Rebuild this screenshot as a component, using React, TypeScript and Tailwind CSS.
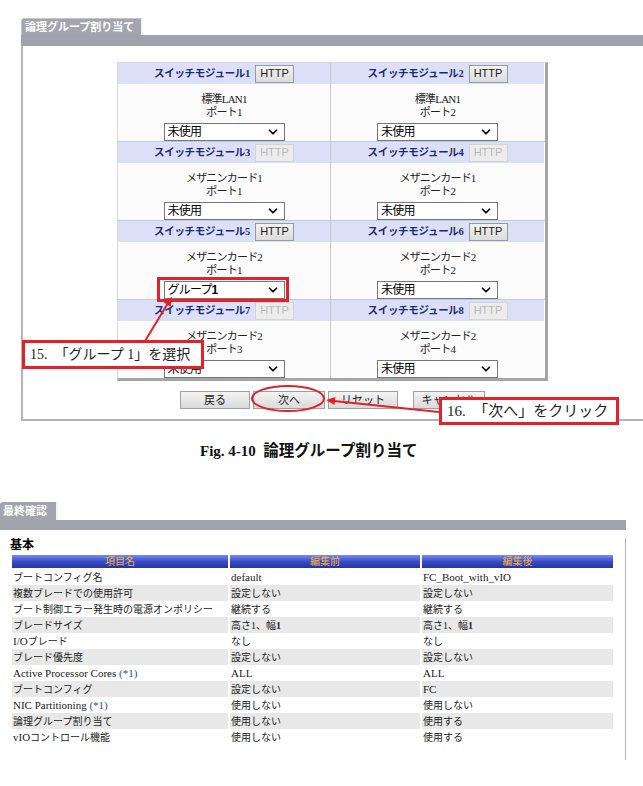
import { ChevronDown } from "lucide-react";

type Module = {
  no: number;
  card: string;
  port: string;
  http: boolean;
  value: string;
};

const modules: Module[][] = [
  [
    { no: 1, card: "標準LAN1", port: "ポート1", http: true, value: "未使用" },
    { no: 2, card: "標準LAN1", port: "ポート2", http: true, value: "未使用" },
  ],
  [
    { no: 3, card: "メザニンカード1", port: "ポート1", http: false, value: "未使用" },
    { no: 4, card: "メザニンカード1", port: "ポート2", http: false, value: "未使用" },
  ],
  [
    { no: 5, card: "メザニンカード2", port: "ポート1", http: true, value: "グループ1" },
    { no: 6, card: "メザニンカード2", port: "ポート2", http: true, value: "未使用" },
  ],
  [
    { no: 7, card: "メザニンカード2", port: "ポート3", http: false, value: "未使用" },
    { no: 8, card: "メザニンカード2", port: "ポート4", http: false, value: "未使用" },
  ],
];

type Row = { name: React.ReactNode; before: React.ReactNode; after: React.ReactNode };

const rows: Row[] = [
  { name: "ブートコンフィグ名", before: <span className="text-[11px]">default</span>, after: <span className="text-[11px]">FC_Boot_with_vIO</span> },
  { name: "複数ブレードでの使用許可", before: "設定しない", after: "設定しない" },
  { name: "ブート制御エラー発生時の電源オンポリシー", before: "継続する", after: "継続する" },
  { name: "ブレードサイズ", before: <>高さ1、幅<b>1</b></>, after: <>高さ1、幅<b>1</b></> },
  { name: <><span className="text-[11px]">I/O</span>ブレード</>, before: "なし", after: "なし" },
  { name: "ブレード優先度", before: "設定しない", after: "設定しない" },
  {
    name: (
      <span className="text-[11px]">
        Active Processor Cores <span className="text-[#3344cc]">(*1)</span>
      </span>
    ),
    before: <span className="text-[11px]">ALL</span>,
    after: <span className="text-[11px]">ALL</span>,
  },
  { name: "ブートコンフィグ", before: "設定しない", after: <span className="text-[11px]">FC</span> },
  {
    name: (
      <span className="text-[11px]">
        NIC Partitioning <span className="text-[#3344cc]">(*1)</span>
      </span>
    ),
    before: "使用しない",
    after: "使用しない",
  },
  { name: "論理グループ割り当て", before: "使用しない", after: "使用する" },
  { name: <><span className="text-[11px]">vIO</span>コントロール機能</>, before: "使用しない", after: "使用する" },
];

function FakeSelect({ value, highlight }: { value: string; highlight?: boolean }) {
  return (
    <div className="relative mt-[4px]">
      <div className="flex h-[18px] w-[121px] items-center justify-between border border-[#767676] bg-white pl-[3px] pr-[4px] font-['Liberation_Sans','Noto_Sans_CJK_JP',sans-serif] text-[12px] leading-none text-black">
        <span>
          {value === "グループ1" ? (
            <>
              グループ<b>1</b>
            </>
          ) : (
            value
          )}
        </span>
        <ChevronDown size={14} strokeWidth={3} />
      </div>
      {highlight && (
        <div className="absolute -top-[4px] -right-[4px] -bottom-[3px] -left-[7px] border-[3px] border-[#e4202a]" />
      )}
    </div>
  );
}

function ModuleCell({ m, right }: { m: Module; right?: boolean }) {
  return (
    <div className={right ? "w-[213px]" : "w-[213px] border-r border-[#c8c8c8]"}>
      <div className="flex h-[21px] items-center justify-center gap-[5px] bg-[#dcdff8]">
        <span className="text-[10.5px] font-bold tracking-[-0.3px] text-[#1c2c70]">
          スイッチモジュール{m.no}
        </span>
        <div
          className={
            m.http
              ? "flex h-[18px] w-[39px] items-center justify-center border border-[#9a9a9a] bg-gradient-to-b from-[#f2f2f2] to-[#dcdcdc] font-['Liberation_Sans',sans-serif] text-[11px] text-[#222]"
              : "flex h-[18px] w-[39px] items-center justify-center border border-[#d4d4d4] bg-[#ececec] font-['Liberation_Sans',sans-serif] text-[11px] text-[#b8b8b8]"
          }
        >
          HTTP
        </div>
      </div>
      <div className="flex h-[57px] flex-col items-center bg-[#fbfbfb] pt-[9px] text-[11px] leading-[13px] tracking-[-0.8px] text-[#222]">
        <span>{m.card}</span>
        <span>{m.port}</span>
        <FakeSelect value={m.value} highlight={m.value === "グループ1"} />
      </div>
    </div>
  );
}

function Btn({ label, className }: { label: string; className?: string }) {
  return (
    <div
      className={
        "flex h-[18px] w-[70px] items-center justify-center border border-[#a0a0a0] bg-gradient-to-b from-[#f4f4f4] to-[#dadada] font-['Liberation_Sans','Noto_Sans_CJK_JP',sans-serif] text-[11px] text-[#222] " +
        (className ?? "")
      }
    >
      {label}
    </div>
  );
}

export default function App() {
  return (
    <div className="relative h-[786px] w-[643px] overflow-hidden bg-white font-['Liberation_Serif','Noto_Sans_CJK_JP',serif]">
      {/* 論理グループ割り当て */}
      <div className="ml-[21px] pt-[18px]">
        <div className="flex h-[17px] w-[122px] items-center rounded-tl-[3px] border-t border-l border-[#c4c4cc] border-r-[2px] border-r-[#f4f4f4] bg-[#a4a4ae] pl-[3px] text-[11px] font-bold text-white">
          論理グループ割り当て
        </div>
        <div className="h-[11px] bg-[#a2a2ac]" />
        <div className="border-b-2 border-l-2 border-[#b4b4b8] pt-[16px] pb-[10px]">
          <div className="ml-[94px] w-[431px] border-t border-l border-r-[3px] border-b-[3px] border-t-[#d8d8d8] border-l-[#d8d8d8] border-r-[#a6a6a6] border-b-[#a6a6a6]">
            {modules.map((pair, i) => (
              <div key={i} className={i === 0 ? "flex" : "flex border-t border-[#c4c8e4]"}>
                <ModuleCell m={pair[0]} />
                <ModuleCell m={pair[1]} right />
              </div>
            ))}
          </div>
          <div className="mt-[10px] ml-[157px] flex">
            <Btn label="戻る" />
            <Btn label="次へ" className="ml-[3px] w-[72px]" />
            <Btn label="リセット" className="ml-[3px]" />
            <Btn label="キャンセル" className="ml-[15px] w-[72px]" />
          </div>
        </div>
      </div>

      <div className="mt-[21px] pl-[200px] text-[15px] font-bold leading-[18px] text-[#111]">
        Fig. 4-10&nbsp;&nbsp;<span className="text-[15.5px]">論理グループ割り当て</span>
      </div>

      {/* 最終確認 */}
      <div className="mt-[42px] w-[626px]">
        <div className="flex h-[18px] w-[58px] items-center rounded-tl-[3px] border-r-[2px] border-r-[#f4f4f4] bg-[#a4a4ae] pl-[3px] text-[11px] font-bold text-white">
          最終確認
        </div>
        <div className="h-[10px] bg-[#a2a2ac]" />
        <div className="h-[222px] border-r border-[#b4b4b8] pl-[12px]">
          <div className="mt-[8px] -ml-[2px] text-[12px] font-bold leading-[14px] text-black">基本</div>
          <div className="mt-[3px] grid grid-cols-[216px_190px_191px] gap-x-[2px]">
            {["項目名", "編集前", "編集後"].map((h) => (
              <div
                key={h}
                className="mb-[1px] flex h-[13px] items-center justify-center bg-gradient-to-b from-[#7a8aec] via-[#3a4ccc] to-[#26329c] text-[10px] text-[#f4b03c]"
              >
                {h}
              </div>
            ))}
            {rows.map((r, i) => {
              const bg = i % 2 === 1 ? "bg-[#e8e8e8]" : "bg-white";
              const cell = "flex h-[16px] items-center pl-[1px] text-[10px] text-[#222] whitespace-nowrap " + bg;
              return [
                <div key={i + "a"} className={cell}>{r.name}</div>,
                <div key={i + "b"} className={cell}>{r.before}</div>,
                <div key={i + "c"} className={cell}>{r.after}</div>,
              ];
            })}
          </div>
        </div>
      </div>

      {/* callouts */}
      <div className="absolute top-[340px] left-[22px] flex h-[29px] w-[182px] items-center whitespace-nowrap border-[3px] border-[#e4202a] bg-white pl-[5px] text-[14px] text-[#222]">
        15.&nbsp; 「グループ 1」を選択
      </div>
      <div className="absolute top-[397px] left-[439px] flex h-[28px] w-[180px] items-center whitespace-nowrap border-[3px] border-[#e4202a] bg-white pl-[5px] text-[15px] text-[#222]">
        16.&nbsp; 「次へ」をクリック
      </div>
      <svg className="pointer-events-none absolute top-0 left-0" width="643" height="786">
        <ellipse cx="288" cy="398.5" rx="36" ry="12.5" fill="none" stroke="#e4202a" strokeWidth="2" />
        <line x1="145" y1="341" x2="168" y2="303" stroke="#e4202a" strokeWidth="2" />
        <polygon points="172,297 170.7,306.8 163.9,302.6" fill="#e4202a" />
        <line x1="439" y1="412" x2="334" y2="401" stroke="#e4202a" strokeWidth="2" />
        <polygon points="326,400 335.4,397 334.5,404.9" fill="#e4202a" />
      </svg>
    </div>
  );
}
